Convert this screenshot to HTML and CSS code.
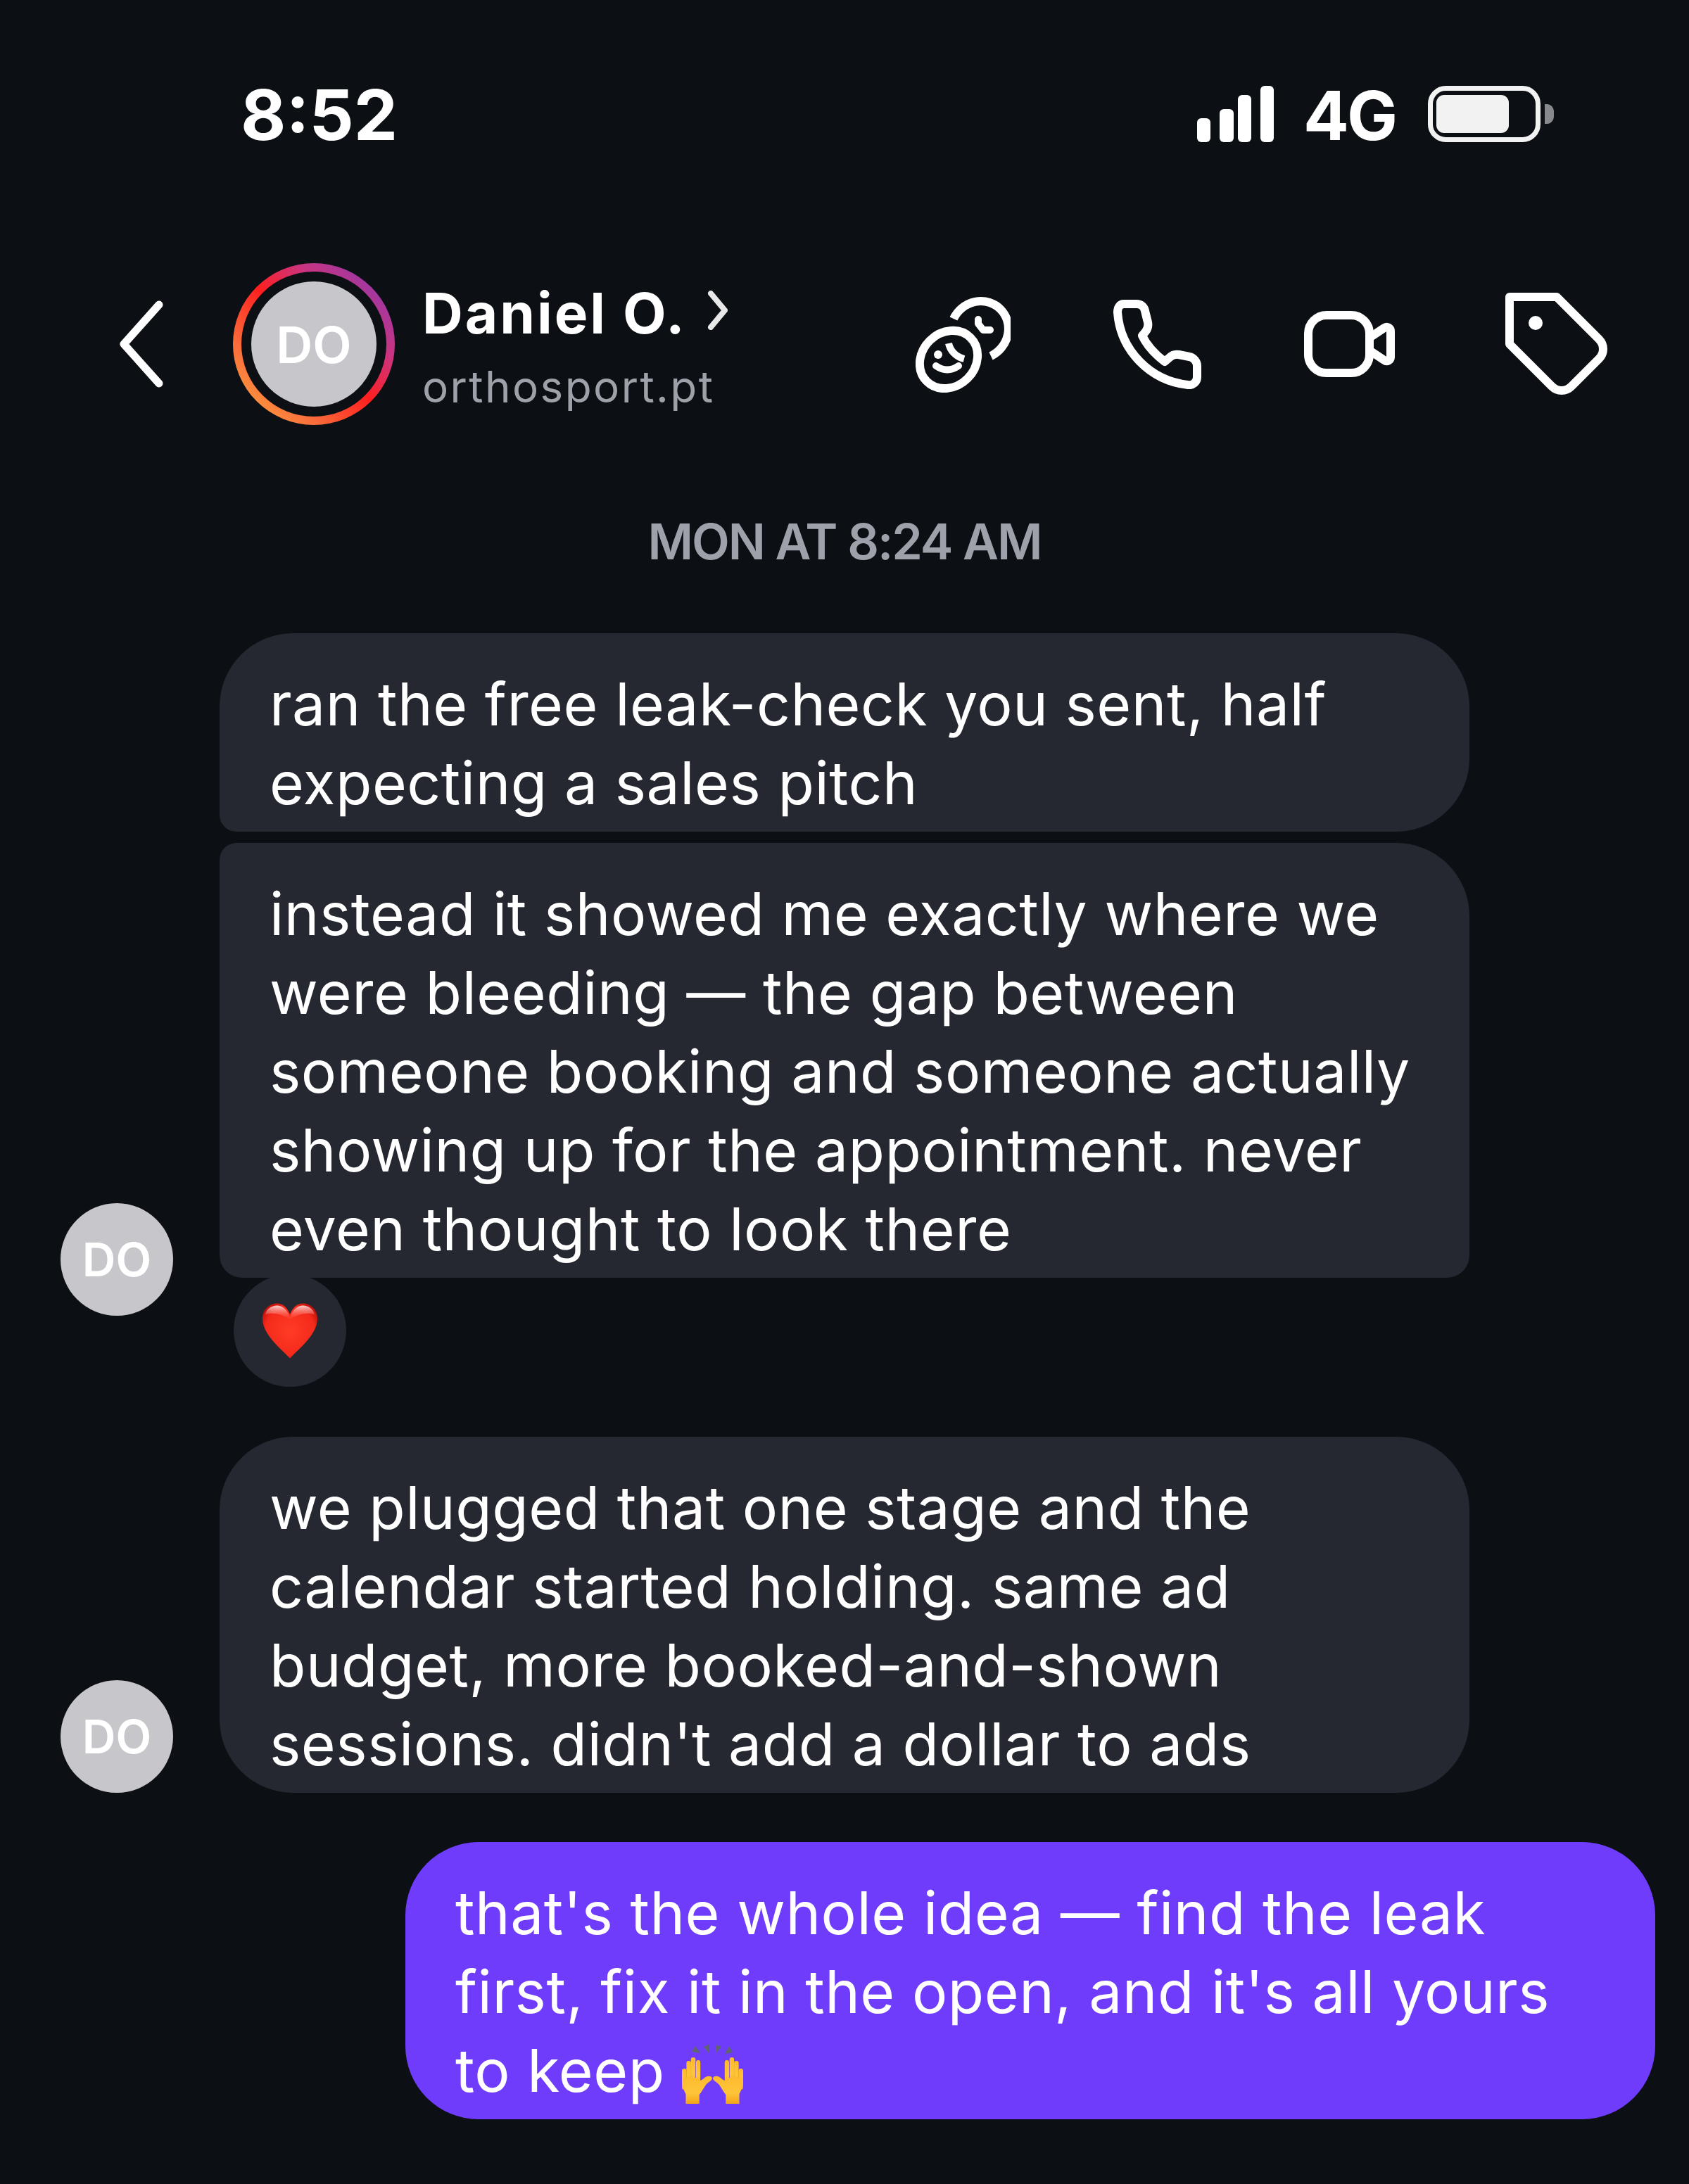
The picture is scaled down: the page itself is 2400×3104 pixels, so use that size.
FILE: index.html
```html
<!DOCTYPE html>
<html lang="en">
<head>
    <meta charset="UTF-8">
    <meta name="viewport" content="width=device-width, initial-scale=1.0">
    <title>Daniel O. - Messages</title>
    <link rel="stylesheet" href="styles.css">
</head>
<body>
    <div class="status-bar">
        <div class="clock">8:52</div>
        <div class="status-right">
            <svg class="signal" width="109" height="80" viewBox="0 0 109 80" fill="#fff">
                <rect x="0" y="46" width="19" height="34" rx="6"/>
                <rect x="32" y="33" width="20" height="47" rx="6"/>
                <rect x="58" y="13" width="19" height="67" rx="6"/>
                <rect x="90" y="0" width="19" height="80" rx="6"/>
            </svg>
            <div class="network">4G</div>
            <svg class="battery" width="179" height="80" viewBox="0 0 179 80">
                <rect x="3.5" y="3.5" width="153" height="73" rx="22" fill="none" stroke="#f2f2f2" stroke-width="7"/>
                <rect x="12" y="13" width="103" height="54" rx="11" fill="#f2f2f2"/>
                <path d="M166 26h3c6 0 10 5 10 11v6c0 6-4 11-10 11h-3z" fill="#88898d"/>
            </svg>
        </div>
    </div>

    <div class="header">
        <svg class="back" width="66" height="124" viewBox="0 0 66 124" fill="none" stroke="#fff" stroke-width="11" stroke-linecap="round" stroke-linejoin="round">
            <path d="M58 6 8 62l50 56"/>
        </svg>
        <div class="ring">
            <div class="ring-inner">
                <div class="avatar avatar-big">DO</div>
            </div>
        </div>
        <div class="who">
            <div class="who-name">Daniel O. <svg width="28" height="56" viewBox="0 0 28 56" fill="none" stroke="#e8e8e8" stroke-width="8" stroke-linecap="round" stroke-linejoin="round"><path d="M4 4l20 24L4 52"/></svg></div>
            <div class="who-site">orthosport.pt</div>
        </div>
        <div class="actions">
            <svg class="act-coins" width="135" height="137" viewBox="0 0 135 137" fill="none" stroke="#fff" stroke-width="12">
                <ellipse cx="47" cy="90" rx="44" ry="38" transform="rotate(-45 47 90)"/>
                <path d="M54 32A42 40 -45 1 1 107 85"/>
                <path d="M89 33v6l7 9h10" stroke-width="10" stroke-linecap="round" stroke-linejoin="round"/>
                <circle cx="32" cy="83" r="6" fill="#fff" stroke="none"/>
                <path d="M29 99q16 11 32 0" stroke-width="10" stroke-linecap="round"/>
                <path d="M47 67c2 10 10 19 22 22" stroke-width="10"/>
            </svg>
            <svg class="act-phone" width="125" height="127" viewBox="0 0 125 127" fill="none" stroke="#fff" stroke-width="12" stroke-linejoin="round">
                <path d="M15 6H33C39 6 44 10 45 16L49 32C50 37 49 41 46 45L41 51C48 66 60 78 73 88L80 82C84 78 88 77 93 78L108 81C114 82 119 88 119 94V110C119 117 113 122 106 121C52 115 10 72 6 18C6 11 9 6 15 6Z"/>
            </svg>
            <svg class="act-video" width="130" height="94" viewBox="0 0 130 94" fill="none" stroke="#fff" stroke-width="12" stroke-linejoin="round">
                <rect x="6" y="6" width="87" height="82" rx="26"/>
                <path d="M93 38 114 24C118 21 123 24 123 29V65C123 70 118 73 114 70L93 56"/>
            </svg>
            <svg class="act-tag" width="146" height="146" viewBox="0 0 146 146" fill="none" stroke="#fff" stroke-width="12" stroke-linejoin="round">
                <path d="M6 6H73L133 66C141 74 141 86 133 94L94 133C86 141 74 141 66 133L6 73Z"/>
                <circle cx="43" cy="43" r="10" fill="#fff" stroke="none"/>
            </svg>
        </div>
    </div>

    <div class="stamp">MON AT 8:24 AM</div>

    <div class="thread">
        <div class="row">
            <div class="gutter"></div>
            <div class="bubble bubble-in bubble-first">ran the free leak-check you sent, half<br>expecting a sales pitch</div>
        </div>
        <div class="row row-next">
            <div class="gutter gutter-drop"><div class="avatar avatar-small">DO</div></div>
            <div class="bubble bubble-in bubble-last">instead it showed me exactly where we<br>were bleeding — the gap between<br>someone booking and someone actually<br>showing up for the appointment. never<br>even thought to look there</div>
        </div>
        <div class="reaction">
            <svg width="78" height="79" viewBox="0 0 80 80">
                <defs>
                    <radialGradient id="heartFill" cx="50%" cy="50%" r="62%">
                        <stop offset="0" stop-color="#ff3b25"/>
                        <stop offset="0.72" stop-color="#f42a1b"/>
                        <stop offset="1" stop-color="#b50a05"/>
                    </radialGradient>
                    <linearGradient id="heartShine" x1="0" y1="0" x2="0" y2="1">
                        <stop offset="0" stop-color="#ffffff" stop-opacity="0.8"/>
                        <stop offset="1" stop-color="#ff5a4a" stop-opacity="0"/>
                    </linearGradient>
                </defs>
                <path d="M40 80C26 65 0 45 0 22 0 9 10 0 21 0c8 0 15 5 19 16C44 5 51 0 59 0c11 0 21 9 21 22 0 23-26 43-40 58z" fill="url(#heartFill)"/>
                <path d="M21 3c8 0 15 6 19 17C44 9 51 3 59 3c8 0 15 5 17 13-10-3-25-2-36 9C29 14 14 13 4 16 6 8 13 3 21 3z" fill="url(#heartShine)"/>
            </svg>
        </div>
        <div class="row row-group">
            <div class="gutter"><div class="avatar avatar-small">DO</div></div>
            <div class="bubble bubble-in">we plugged that one stage and the<br>calendar started holding. same ad<br>budget, more booked-and-shown<br>sessions. didn't add a dollar to ads</div>
        </div>
        <div class="row row-mine">
            <div class="bubble bubble-mine">that's the whole idea — find the leak<br>first, fix it in the open, and it's all yours<br>to keep <svg class="hands" width="87" height="85" viewBox="0 0 87 85">
                    <defs>
                        <linearGradient id="handFill" x1="0" y1="0" x2="0" y2="1">
                            <stop offset="0" stop-color="#fdb92f"/>
                            <stop offset="0.6" stop-color="#fec53a"/>
                            <stop offset="1" stop-color="#f5a418"/>
                        </linearGradient>
                        <g id="hand">
                            <rect x="0" y="35" width="6.5" height="30" rx="3.2"/>
                            <rect x="6.4" y="24" width="6.5" height="34" rx="3.2"/>
                            <rect x="12.8" y="19" width="6.5" height="40" rx="3.2"/>
                            <rect x="20" y="23" width="6.2" height="36" rx="3.1"/>
                            <path d="M.5 50C.5 60 3 67 5.5 71V85H24.7V72C28 68 30 64 34 58 37 54 42 53 43 49 43 46 39 45 36 46 32 47 30 51 26 52V48H.5Z"/>
                        </g>
                    </defs>
                    <path d="M19 3 14 11 26 13ZM38 1 31 4 38 13ZM48 1 56 4 48 13ZM67 3 72 12 61 14Z" fill="#5f6470"/>
                    <g fill="url(#handFill)">
                        <use href="#hand"/>
                        <use href="#hand" transform="translate(87 0) scale(-1 1)"/>
                    </g>
                </svg></div>
        </div>
    </div>
</body>
</html>
```

FILE: styles.css
```css
body {
    margin: 0;
    width: 2400px;
    height: 3104px;
    overflow: hidden;
    background: #0c0f14;
    color: #fff;
    font-family: Inter, "Liberation Sans", sans-serif;
}
.status-bar {
    height: 321px;
    box-sizing: border-box;
    padding: 110px 192px 0 342px;
    display: flex;
    justify-content: space-between;
    align-items: flex-start;
}
.clock {
    font-size: 99px;
    line-height: 106px;
    font-weight: 700;
}
.status-right {
    display: flex;
    align-items: flex-start;
    padding-top: 12px;
}
.network {
    font-size: 96px;
    line-height: 84px;
    font-weight: 700;
    letter-spacing: -3px;
    margin: 0 46px 0 42px;
}
.header {
    display: flex;
    align-items: center;
    height: 336px;
    box-sizing: border-box;
    padding: 50px 115px 50px 168px;
}
.back {
    margin-right: 97px;
}
.ring {
    width: 230px;
    height: 230px;
    border-radius: 50%;
    padding: 12px;
    box-sizing: border-box;
    background: linear-gradient(45deg, #feb340, #f9703c 25%, #fe1f1f 50%, #cb3480 70%, #7d3bbd 100%);
}
.ring-inner {
    width: 100%;
    height: 100%;
    border-radius: 50%;
    background: #0c0f14;
    display: flex;
    align-items: center;
    justify-content: center;
}
.avatar {
    border-radius: 50%;
    background: #c7c6cb;
    color: #fff;
    font-weight: 600;
    display: flex;
    align-items: center;
    justify-content: center;
}
.avatar-big {
    width: 178px;
    height: 178px;
    font-size: 72px;
}
.avatar-small {
    width: 160px;
    height: 160px;
    font-size: 66px;
}
.who {
    margin-left: 39px;
    padding-top: 8px;
    flex: 1;
}
.who-name {
    font-size: 80px;
    line-height: 100px;
    font-weight: 700;
    letter-spacing: 3px;
    display: flex;
    align-items: center;
}
.who-name svg {
    margin-left: 30px;
    margin-top: -8px;
}
.who-site {
    margin-top: 13px;
    font-size: 62px;
    line-height: 84px;
    color: #9ea1a9;
    letter-spacing: 2.4px;
}
.actions {
    display: flex;
    align-items: center;
}
.act-coins,
.act-phone {
    margin-right: 146px;
}
.act-video {
    margin-right: 156px;
}
.stamp {
    margin-top: 68px;
    text-align: center;
    font-size: 70px;
    line-height: 90px;
    font-weight: 600;
    color: #9ea1a9;
    letter-spacing: -2px;
}
.thread {
    margin-top: 85px;
}
.row {
    display: flex;
    align-items: flex-end;
    padding-left: 86px;
}
.gutter {
    width: 160px;
    margin-right: 66px;
    flex: none;
}
.gutter-drop {
    margin-bottom: -54px;
}
.row-next {
    margin-top: 16px;
}
.row-group {
    margin-top: 71px;
}
.row-mine {
    justify-content: flex-end;
    padding-right: 48px;
    margin-top: 70px;
}
.bubble {
    width: 1776px;
    box-sizing: border-box;
    padding: 45px 71px 13px;
    border-radius: 104px;
    font-size: 84px;
    font-weight: 375;
    line-height: 112px;
    letter-spacing: 0.5px;
    white-space: nowrap;
}
.bubble-in {
    background: #252830;
}
.bubble-first {
    border-bottom-left-radius: 24px;
}
.bubble-last {
    border-top-left-radius: 24px;
    border-bottom-left-radius: 32px;
    border-bottom-right-radius: 32px;
}
.bubble-mine {
    background: #703cfb;
}
.hands {
    vertical-align: -17px;
}
.reaction {
    width: 160px;
    height: 160px;
    margin: -5px 0 0 332px;
    position: relative;
    border-radius: 50%;
    background: #252830;
    display: flex;
    align-items: center;
    justify-content: center;
}
```
